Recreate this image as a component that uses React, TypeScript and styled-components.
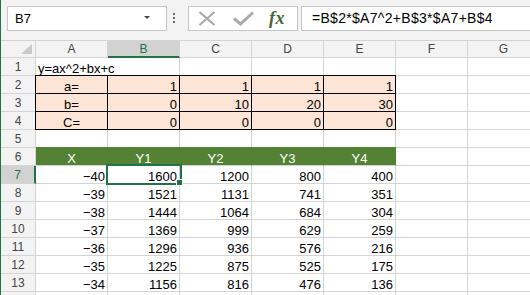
import React from 'react';
import styled, { createGlobalStyle } from 'styled-components';

const GREEN = '#217346';
const GRID = '#d4d4d4';
const HEAD_BG = '#f3f3f3';
const SEL_BG = '#d2d2d2';
const PEACH = '#fce4d6';
const BAND = '#548235';

const GlobalStyle = createGlobalStyle`
  html, body { margin: 0; padding: 0; background: #fff; }
  body { overflow: hidden; }
  * { box-sizing: border-box; }
`;

const Window = styled.div`
  width: 530px;
  height: 295px;
  border-left: 1px solid ${GREEN};
  overflow: hidden;
  background: #fff;
  display: flex;
  flex-direction: column;
  font-family: "Liberation Sans", Arial, sans-serif;
`;

const FormulaBar = styled.div`
  flex: none;
  height: 41px;
  background: ${HEAD_BG};
  border-bottom: 1px solid ${GRID};
  display: flex;
  align-items: flex-start;
  padding: 6px 0 0 6px;
`;

const NameBox = styled.div`
  flex: none;
  width: 160px;
  height: 25px;
  border: 1px solid #c6c6c6;
  background: #fff;
  display: flex;
  align-items: center;
  justify-content: space-between;
  padding: 0 16px 0 7px;
  font-size: 13px;
  line-height: 23px;
  color: #000;
`;

const DropArrow = styled.span`
  width: 0;
  height: 0;
  border-left: 3px solid transparent;
  border-right: 3px solid transparent;
  border-top: 3px solid #3c4a3c;
  margin-bottom: 3px;
`;

const Grip = styled.div`
  flex: none;
  display: flex;
  flex-direction: column;
  gap: 2px;
  margin: 7px 13px 0 6px;
`;

const GripDot = styled.span`
  width: 2px;
  height: 2px;
  background: #5c6e5c;
`;

const ButtonBox = styled.div`
  flex: none;
  width: 110px;
  height: 25px;
  border: 1px solid #c6c6c6;
  background: #fff;
  display: flex;
  align-items: center;
  padding-left: 9px;
`;

const IconSlot = styled.span<{ $gap: number }>`
  display: flex;
  margin-left: ${p => p.$gap}px;
`;

const Fx = styled.span`
  margin-left: 15px;
  font-family: "Liberation Serif", "Times New Roman", serif;
  font-style: italic;
  font-weight: bold;
  font-size: 18px;
  line-height: 23px;
  color: #46663a;
  letter-spacing: 0.5px;
`;

const FormulaInput = styled.div`
  flex: 1;
  height: 25px;
  margin-left: 3px;
  border: 1px solid #c6c6c6;
  border-right: none;
  background: #fff;
  padding-left: 10px;
  font-size: 14px;
  line-height: 23px;
  letter-spacing: 0.3px;
  color: #000;
  white-space: nowrap;
`;

const Sheet = styled.div`
  position: relative;
  flex: none;
  display: grid;
  grid-template-columns: 35px repeat(7, 72px);
  grid-template-rows: 17px;
  grid-auto-rows: 18px;
`;

const Corner = styled.div`
  background: ${HEAD_BG};
  border-right: 1px solid ${GRID};
  border-bottom: 1px solid ${GRID};
  display: flex;
  justify-content: flex-end;
  align-items: flex-end;
  padding: 0 3px 3px 0;
`;

const ColHeader = styled.div<{ $selected?: boolean }>`
  background: ${p => (p.$selected ? SEL_BG : HEAD_BG)};
  border-right: 1px solid ${GRID};
  border-bottom: ${p => (p.$selected ? `2px solid ${GREEN}` : `1px solid ${GRID}`)};
  color: ${p => (p.$selected ? GREEN : '#444')};
  display: flex;
  align-items: center;
  justify-content: center;
  font-size: 12px;
  line-height: 16px;
`;

const RowHeader = styled.div<{ $selected?: boolean }>`
  background: ${p => (p.$selected ? SEL_BG : HEAD_BG)};
  border-right: ${p => (p.$selected ? `2px solid ${GREEN}` : `1px solid ${GRID}`)};
  border-bottom: 1px solid ${GRID};
  color: ${p => (p.$selected ? GREEN : '#444')};
  display: flex;
  align-items: flex-end;
  justify-content: center;
  padding-bottom: 1px;
  font-size: 12px;
  line-height: 13px;
`;

type Tone = 'plain' | 'param' | 'band';
type Align = 'left' | 'center' | 'right';

const bgOf: Record<Tone, string> = { plain: '#fff', param: PEACH, band: BAND };
const rightLineOf: Record<Tone, string> = { plain: GRID, param: '#000', band: BAND };
const bottomLineOf: Record<Tone, string> = { plain: GRID, param: '#000', band: GRID };

const shadowOf = (tone: Tone, top?: boolean, left?: boolean) => {
  if (tone === 'band') return `0 -1px 0 ${BAND}`;
  if (tone !== 'param') return 'none';
  const parts: string[] = [];
  if (top) parts.push('0 -1px 0 #000');
  if (left) parts.push('-1px 0 0 #000');
  if (top && left) parts.push('-1px -1px 0 #000');
  return parts.length ? parts.join(', ') : 'none';
};

const Cell = styled.div<{ $tone: Tone; $align: Align; $span?: number; $edgeTop?: boolean; $edgeLeft?: boolean }>`
  min-width: 0;
  grid-column: span ${p => p.$span ?? 1};
  display: flex;
  align-items: flex-end;
  justify-content: ${p => (p.$align === 'left' ? 'flex-start' : p.$align === 'center' ? 'center' : 'flex-end')};
  padding: 0 2px;
  background: ${p => bgOf[p.$tone]};
  border-right: 1px solid ${p => rightLineOf[p.$tone]};
  border-bottom: 1px solid ${p => bottomLineOf[p.$tone]};
  box-shadow: ${p => shadowOf(p.$tone, p.$edgeTop, p.$edgeLeft)};
  color: ${p => (p.$tone === 'band' ? '#fff' : '#000')};
  font-size: 13px;
  line-height: 13px;
  white-space: nowrap;
`;

const Selection = styled.div`
  position: absolute;
  left: 105px;
  top: 123px;
  width: 76px;
  height: 21px;
  border: 2px solid ${GREEN};
  pointer-events: none;
`;

const FillHandle = styled.div`
  position: absolute;
  left: 175px;
  top: 138px;
  width: 7px;
  height: 7px;
  background: ${GREEN};
  border: 1px solid #fff;
`;

const COLS = ['A', 'B', 'C', 'D', 'E', 'F', 'G'];

const params: { label: string; values: number[] }[] = [
  { label: 'a=', values: [1, 1, 1, 1] },
  { label: 'b=', values: [0, 10, 20, 30] },
  { label: 'C=', values: [0, 0, 0, 0] },
];

const table: number[][] = [
  [-40, 1600, 1200, 800, 400],
  [-39, 1521, 1131, 741, 351],
  [-38, 1444, 1064, 684, 304],
  [-37, 1369, 999, 629, 259],
  [-36, 1296, 936, 576, 216],
  [-35, 1225, 875, 525, 175],
  [-34, 1156, 816, 476, 136],
];

const fmt = (n: number) => (n < 0 ? `\u2212${Math.abs(n)}` : String(n));

const Blank = ({ n }: { n: number }) => (
  <>
    {Array.from({ length: n }, (_, i) => (
      <Cell key={i} $tone="plain" $align="right" />
    ))}
  </>
);

const CancelIcon = () => (
  <svg width="18" height="15" viewBox="0 0 18 15">
    <path d="M1.5 1 L16.5 14 M16.5 1 L1.5 14" stroke="#a9a9a9" strokeWidth="2.2" fill="none" />
  </svg>
);

const EnterIcon = () => (
  <svg width="21" height="15" viewBox="0 0 21 15">
    <path d="M1 7.5 L7.5 13 L20 1.5" stroke="#a9a9a9" strokeWidth="3" fill="none" strokeLinejoin="miter" />
  </svg>
);

const SelectAll = () => (
  <svg width="11" height="10" viewBox="0 0 11 10">
    <path d="M11 0 L11 10 L0 10 Z" fill="#c9c9c9" />
  </svg>
);

export default function App() {
  return (
    <>
      <GlobalStyle />
      <Window>
        <FormulaBar>
          <NameBox>
            <span>B7</span>
            <DropArrow />
          </NameBox>
          <Grip>
            <GripDot />
            <GripDot />
            <GripDot />
          </Grip>
          <ButtonBox>
            <IconSlot $gap={0}>
              <CancelIcon />
            </IconSlot>
            <IconSlot $gap={17}>
              <EnterIcon />
            </IconSlot>
            <Fx>fx</Fx>
          </ButtonBox>
          <FormulaInput>=B$2*$A7^2+B$3*$A7+B$4</FormulaInput>
        </FormulaBar>

        <Sheet>
          <Corner>
            <SelectAll />
          </Corner>
          {COLS.map(c => (
            <ColHeader key={c} $selected={c === 'B'}>
              {c}
            </ColHeader>
          ))}

          <RowHeader>1</RowHeader>
          <Cell $tone="plain" $align="left" $span={2}>
            y=ax^2+bx+c
          </Cell>
          <Blank n={5} />

          {params.map((p, i) => (
            <React.Fragment key={p.label}>
              <RowHeader>{i + 2}</RowHeader>
              <Cell $tone="param" $align="center" $edgeTop={i === 0} $edgeLeft>
                {p.label}
              </Cell>
              {p.values.map((v, j) => (
                <Cell key={j} $tone="param" $align="right" $edgeTop={i === 0}>
                  {v}
                </Cell>
              ))}
              <Blank n={2} />
            </React.Fragment>
          ))}

          <RowHeader>5</RowHeader>
          <Blank n={7} />

          <RowHeader>6</RowHeader>
          {['X', 'Y1', 'Y2', 'Y3', 'Y4'].map(h => (
            <Cell key={h} $tone="band" $align="center">
              {h}
            </Cell>
          ))}
          <Blank n={2} />

          {table.map((row, i) => (
            <React.Fragment key={i}>
              <RowHeader $selected={i === 0}>{i + 7}</RowHeader>
              {row.map((v, j) => (
                <Cell key={j} $tone="plain" $align="right">
                  {fmt(v)}
                </Cell>
              ))}
              <Blank n={2} />
            </React.Fragment>
          ))}

          <RowHeader />
          <Blank n={7} />

          <Selection />
          <FillHandle />
        </Sheet>
      </Window>
    </>
  );
}
